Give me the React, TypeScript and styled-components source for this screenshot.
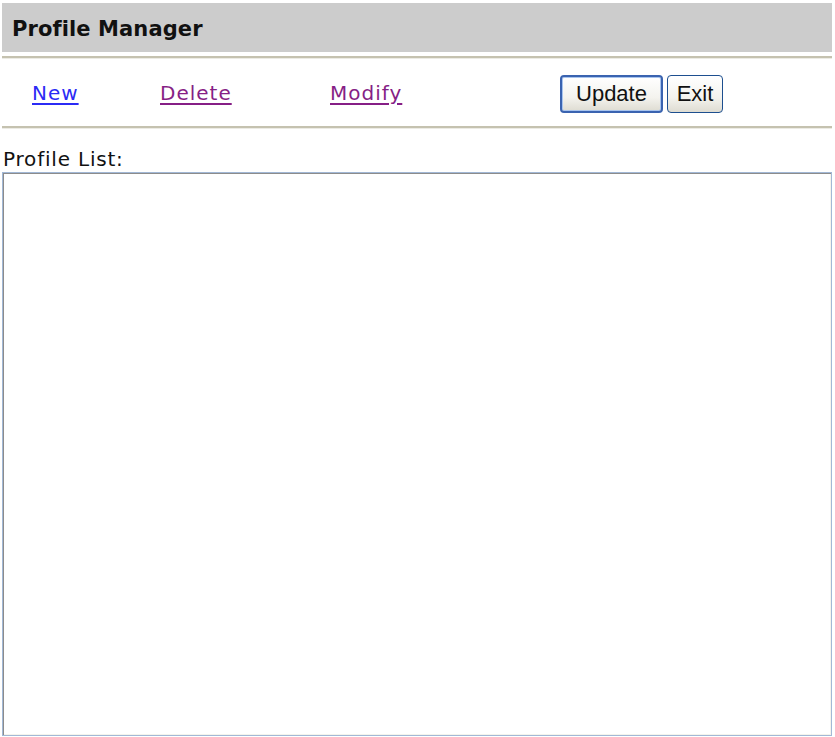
import styled, { createGlobalStyle, css } from 'styled-components';

const GlobalStyle = createGlobalStyle`
  html, body {
    margin: 0;
    padding: 0;
    background: #ffffff;
  }
`;

const App = () => {
  return (
    <>
      <GlobalStyle />
      <Page>
        <Header>Profile Manager</Header>
        <Rule />
        <Toolbar>
          <Action href="#new">New</Action>
          <Action href="#delete" $visited>
            Delete
          </Action>
          <Action href="#modify" $visited>
            Modify
          </Action>
          <Buttons>
            <Button type="button" $primary>
              Update
            </Button>
            <Button type="button">Exit</Button>
          </Buttons>
        </Toolbar>
        <Rule />
        <Label htmlFor="profile-list">Profile List:</Label>
        <ListBox id="profile-list" readOnly />
      </Page>
    </>
  );
};

export default App;

const Page = styled.div`
  box-sizing: border-box;
  width: 835px;
  padding: 3px 3px 0 2px;
  font-family: 'DejaVu Sans', Verdana, sans-serif;
  color: #000000;
`;

const Header = styled.div`
  box-sizing: border-box;
  display: flex;
  align-items: center;
  height: 49px;
  padding: 2px 0 0 10px;
  background: #cccccc;
  font-size: 21px;
  font-weight: 700;
  letter-spacing: 0.1px;
  color: #111111;
`;

const Rule = styled.div`
  margin-top: 4px;
  height: 0;
  border-top: 2px solid #c5c2b0;
  border-bottom: 1px solid #ecebe4;
`;

const Toolbar = styled.div`
  box-sizing: border-box;
  display: grid;
  grid-template-columns: 128px 170px 230px auto;
  align-items: center;
  height: 63px;
  padding: 0 0 0 30px;
`;

const Action = styled.a<{ $visited?: boolean }>`
  justify-self: start;
  margin-top: 4px;
  font-size: 20px;
  letter-spacing: 1px;
  color: ${(p) => (p.$visited ? '#861f86' : '#2b2bf5')};
  text-decoration: underline;
  text-underline-offset: 3px;
`;

const Buttons = styled.div`
  display: flex;
  gap: 4px;
  margin-top: 6px;
`;

const Button = styled.button<{ $primary?: boolean }>`
  box-sizing: border-box;
  height: 38px;
  padding: 0 8px;
  border: 1px solid #1d4f8f;
  border-radius: 4px;
  background: linear-gradient(#ffffff 0%, #f4f3ee 60%, #dedcd2 100%);
  font-family: 'Liberation Sans', Arial, sans-serif;
  font-size: 22px;
  color: #111111;
  cursor: pointer;
  min-width: 56px;

  ${(p) =>
    p.$primary &&
    css`
      min-width: 103px;
      border: 2px solid #3a63b0;
      box-shadow: inset 0 0 0 1px #a8c4ee;
    `}
`;

const Label = styled.label`
  display: block;
  margin: 19px 0 2px 1px;
  font-size: 20px;
  line-height: 22px;
  letter-spacing: 0.8px;
  color: #111111;
`;

const ListBox = styled.textarea`
  box-sizing: border-box;
  display: block;
  width: 830px;
  height: 564px;
  margin: 0;
  padding: 0;
  resize: none;
  border: 1px solid #a2b8d6;
  box-shadow: inset 1px 1px 0 #8c8c8c, inset -1px -1px 0 #f4f4ec;
  background: #ffffff;
  outline: none;
`;
